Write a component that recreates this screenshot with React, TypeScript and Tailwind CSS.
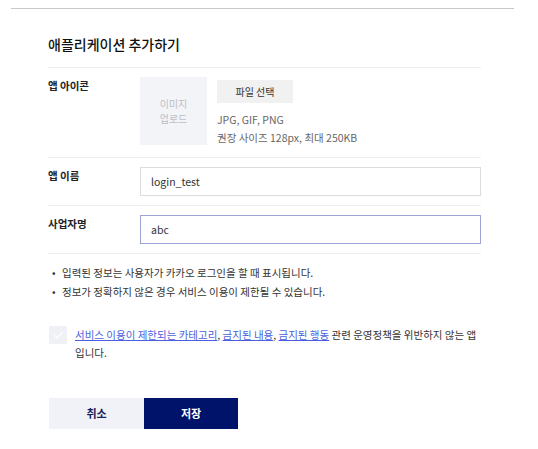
import { Check } from "lucide-react";

function Row({ label, tall, children }: { label: string; tall?: boolean; children: React.ReactNode }) {
  return (
    <div className={tall ? "flex border-b border-[#efefef] pt-[9px] pb-[10px]" : "flex border-b border-[#efefef] py-[9px]"}>
      <div className="w-[92px] shrink-0 pt-[2px] text-[10.5px] font-bold leading-[14px] text-[#222]">{label}</div>
      <div className="flex-1">{children}</div>
    </div>
  );
}

export default function App() {
  return (
    <div className="min-h-screen bg-white pt-2 font-['Noto_Sans_CJK_KR',sans-serif] text-[#222]">
      <div className="ml-[11px] h-px w-[503px] bg-[#c8c8c8]" />
      <div className="ml-[48px] w-[433px]">
        {/* title */}
        <h1 className="h-[59px] border-b border-[#efefef] pt-[25px] text-[14px] font-medium leading-[20px] text-[#111]">
          애플리케이션 추가하기
        </h1>

        <Row label="앱 아이콘" tall>
          <div className="flex">
            <div className="flex h-[68px] w-[67px] items-center justify-center bg-[#f3f4f8] text-center text-[10px] leading-[15px] text-[#bdbdc4]">
              이미지
              <br />
              업로드
            </div>
            <div className="ml-[10px]">
              <button className="h-[23px] w-[76px] bg-[#f1f1f1] text-[10px] text-[#333]">파일 선택</button>
              <div className="mt-[8px] text-[10.5px] leading-[18px] text-[#666]">
                <p>JPG, GIF, PNG</p>
                <p>권장 사이즈 128px, 최대 250KB</p>
              </div>
            </div>
          </div>
        </Row>

        <Row label="앱 이름">
          <input
            defaultValue="login_test"
            className="h-[29px] w-full border border-[#dcdcdc] px-[10px] text-[10.5px] text-[#333] outline-none"
          />
        </Row>

        <Row label="사업자명">
          <input
            defaultValue="abc"
            className="h-[29px] w-full border border-[#9ea3d6] px-[10px] text-[10.5px] text-[#333] outline-none"
          />
        </Row>

        <ul className="mt-[9px] text-[10.5px] leading-[19px] text-[#333]">
          <li className="flex">
            <span className="w-[14px] pl-[4px]">•</span>입력된 정보는 사용자가 카카오 로그인을 할 때 표시됩니다.
          </li>
          <li className="flex">
            <span className="w-[14px] pl-[4px]">•</span>정보가 정확하지 않은 경우 서비스 이용이 제한될 수 있습니다.
          </li>
        </ul>

        <div className="mt-[25px] flex pl-px">
          <span className="flex h-[18px] w-[18px] shrink-0 items-center justify-center bg-[#f0f1f6]">
            <Check className="h-[11px] w-[11px] text-white" strokeWidth={2.5} />
          </span>
          <p className="ml-[8px] text-[10.5px] leading-[18px] text-[#333]">
            <a className="text-[#4a5fe0] underline">서비스 이용이 제한되는 카테고리</a>,{" "}
            <a className="text-[#4a5fe0] underline">금지된 내용</a>,{" "}
            <a className="text-[#4a5fe0] underline">금지된 행동</a> 관련 운영정책을 위반하지 않는 앱 입니다.
          </p>
        </div>

        <div className="mt-[36px] flex pl-px">
          <button className="h-[31px] w-[95px] bg-[#f1f2f8] text-[11px] font-bold text-[#1a2260]">취소</button>
          <button className="h-[31px] w-[94px] bg-[#00136b] text-[11px] font-bold text-white">저장</button>
        </div>
      </div>
    </div>
  );
}
